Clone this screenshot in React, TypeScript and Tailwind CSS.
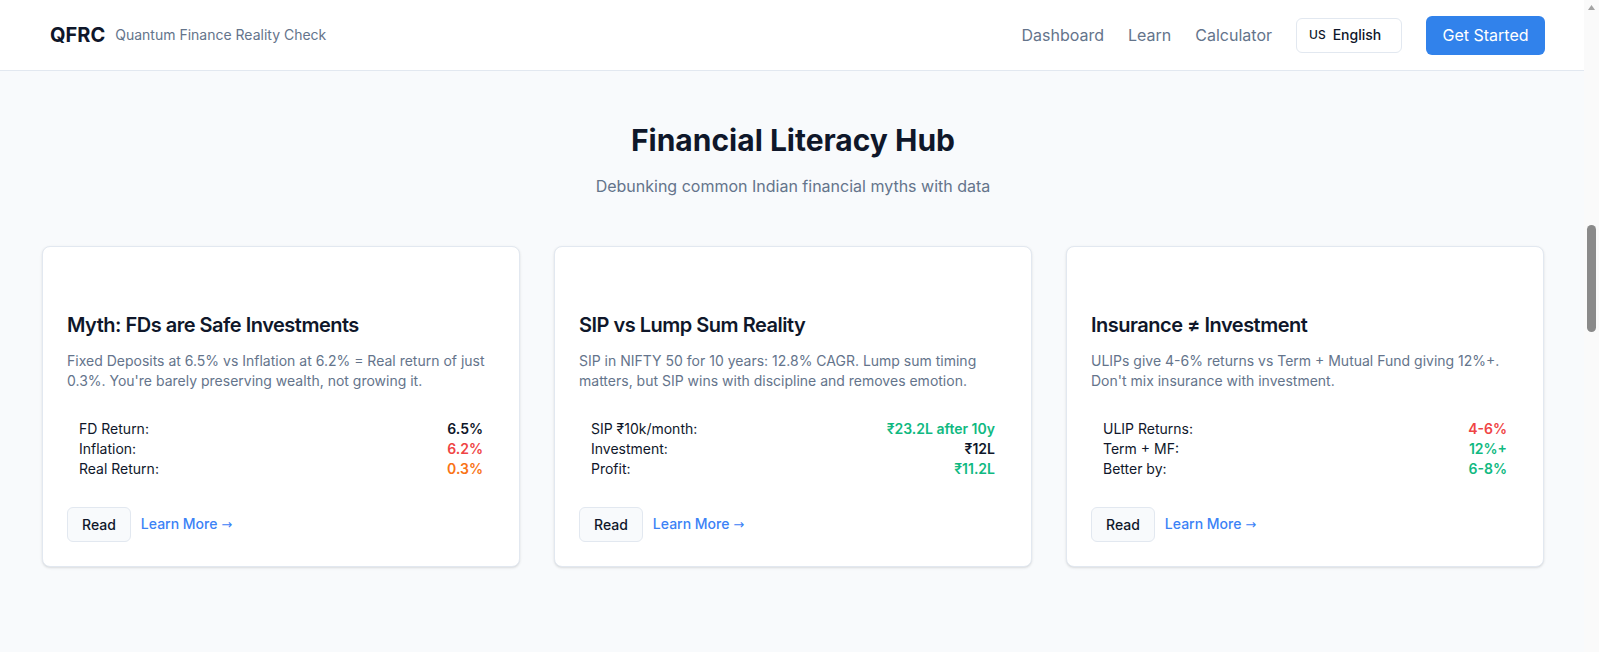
import React from "react";

type Stat = { label: string; value: string; tone: string };

const myths: { title: string; body: string; stats: Stat[] }[] = [
  {
    title: "Myth: FDs are Safe Investments",
    body: "Fixed Deposits at 6.5% vs Inflation at 6.2% = Real return of just 0.3%. You're barely preserving wealth, not growing it.",
    stats: [
      { label: "FD Return:", value: "6.5%", tone: "text-[#0f172a]" },
      { label: "Inflation:", value: "6.2%", tone: "text-[#ef4444]" },
      { label: "Real Return:", value: "0.3%", tone: "text-[#f97316]" },
    ],
  },
  {
    title: "SIP vs Lump Sum Reality",
    body: "SIP in NIFTY 50 for 10 years: 12.8% CAGR. Lump sum timing matters, but SIP wins with discipline and removes emotion.",
    stats: [
      { label: "SIP ₹10k/month:", value: "₹23.2L after 10y", tone: "text-[#10b981]" },
      { label: "Investment:", value: "₹12L", tone: "text-[#0f172a]" },
      { label: "Profit:", value: "₹11.2L", tone: "text-[#10b981]" },
    ],
  },
  {
    title: "Insurance ≠ Investment",
    body: "ULIPs give 4-6% returns vs Term + Mutual Fund giving 12%+. Don't mix insurance with investment.",
    stats: [
      { label: "ULIP Returns:", value: "4-6%", tone: "text-[#ef4444]" },
      { label: "Term + MF:", value: "12%+", tone: "text-[#10b981]" },
      { label: "Better by:", value: "6-8%", tone: "text-[#10b981]" },
    ],
  },
];

function MythCard({ title, body, stats }: (typeof myths)[number]) {
  return (
    <div className="rounded-lg border border-[#e2e8f0] bg-white p-6 shadow-sm">
      {/* icon slot (empty in the design) */}
      <div className="h-10" />
      <h3 className="text-xl font-semibold tracking-tight text-[#0f172a]">{title}</h3>
      <p className="mt-3 text-sm text-[#64748b]">{body}</p>

      <div className="mt-4 rounded-md p-3 text-sm">
        {stats.map((s) => (
          <div key={s.label} className="flex items-center justify-between">
            <span className="text-[#0f172a]">{s.label}</span>
            <span className={`font-semibold ${s.tone}`}>{s.value}</span>
          </div>
        ))}
      </div>

      <div className="mt-4 flex items-center gap-2.5">
        <button className="h-[35px] rounded-md border border-[#e2e8f0] bg-[#f8fafc] px-3.5 text-sm font-medium text-[#0f172a]">
          Read
        </button>
        <a className="text-sm font-medium text-[#3b82f6]">
          Learn More <span className="font-['DejaVu_Sans',sans-serif] text-[13px] font-normal">→</span>
        </a>
      </div>
    </div>
  );
}

function FakeScrollbar() {
  return (
    <div className="fixed right-0 top-0 flex h-screen w-[15px] flex-col items-center bg-[#fafafa]">
      <svg width="15" height="15" viewBox="0 0 15 15" className="shrink-0">
        <path d="M4 10 L7.5 5 L11 10 Z" fill="#a3a3a3" />
      </svg>
      <div className="mt-[210px] h-[107px] w-[9px] rounded-full bg-[#8a8a8a]" />
    </div>
  );
}

export default function App() {
  return (
    <div className="min-h-screen bg-[#f8fafc] pr-[15px] font-['Inter',sans-serif]">
      {/* Header */}
      <header className="flex h-[71px] items-center justify-between border-b border-[#e2e8f0] bg-white pl-[50px] pr-[39px]">
        <div className="flex items-center gap-2.5">
          <span className="text-xl font-bold text-[#0f172a]">QFRC</span>
          <span className="text-sm text-[#64748b]">Quantum Finance Reality Check</span>
        </div>
        <nav className="flex items-center gap-6">
          <a className="text-base text-[#64748b]">Dashboard</a>
          <a className="text-base text-[#64748b]">Learn</a>
          <a className="text-base text-[#64748b]">Calculator</a>
          <div className="flex h-[35px] w-[106px] items-center gap-[7px] rounded-md border border-[#e2e8f0] bg-white px-[12px]">
            <span className="text-[12px] font-medium text-[#0f172a]">US</span>
            <span className="text-sm font-medium text-[#0f172a]">English</span>
          </div>
          <button className="h-[39px] w-[119px] rounded-md bg-[#3182eb] text-base font-normal text-white">
            Get Started
          </button>
        </nav>
      </header>

      {/* Hub */}
      <main className="pb-[80px] pl-[42px] pr-[40px] pt-[51px]">
        <h1 className="text-center text-3xl font-bold text-[#0f172a]">Financial Literacy Hub</h1>
        <p className="mt-4 text-center text-base text-[#64748b]">
          Debunking common Indian financial myths with data
        </p>

        <div className="mt-12 grid grid-cols-3 gap-[34px]">
          {myths.map((m) => (
            <MythCard key={m.title} {...m} />
          ))}
        </div>
      </main>

      <FakeScrollbar />
    </div>
  );
}
